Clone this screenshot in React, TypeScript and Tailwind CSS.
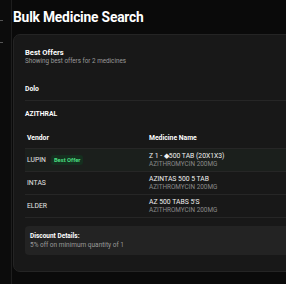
import React from "react";

const rows = [
  { vendor: "LUPIN", best: true, name: "Z 1 - \u25C6500 TAB (20X1X3)", sub: "AZITHROMYCIN 200MG" },
  { vendor: "INTAS", best: false, name: "AZINTAS 500 5 TAB", sub: "AZITHROMYCIN 200MG" },
  { vendor: "ELDER", best: false, name: "AZ 500 TABS 5'S", sub: "AZITHROMYCIN 200MG" },
];

export default function App() {
  return (
    <div
      className="w-[286px] h-[284px] flex bg-[#0a0a0a] overflow-hidden text-white"
      style={{ fontFamily: 'Roboto, "Noto Sans", sans-serif' }}
    >
      <div className="w-[12px] shrink-0 border-r border-[#1e1e1e] bg-[#0c0c0c] flex flex-col">
        <div className="mt-[20px] w-[3px] h-[1px] bg-[#555]" />
        <div className="mt-[21px] w-[3px] h-[1px] bg-[#555]" />
      </div>
      <div className="flex-1 pl-[1px] flex flex-col min-w-0">
        <div className="h-[34px] flex items-center">
          <h1 className="text-[13.8px] leading-none font-bold tracking-[-0.2px] mt-[1px]">Bulk Medicine Search</h1>
        </div>
        <div className="w-[300px] h-[238px] rounded-[7px] border border-[#242424] bg-[#181818] px-[11px] pt-[13px]">
          <div className="text-[7.6px] leading-[10px] font-bold">Best Offers</div>
          <div className="text-[6.3px] leading-[7px] text-[#9a9a9a]">Showing best offers for 2 medicines</div>

          <div className="mt-[14px] h-[22px] flex items-center border-b border-[#262626]">
            <span className="text-[6.8px] font-bold">Dolo</span>
          </div>
          <div className="h-[26px] flex items-center">
            <span className="text-[6.8px] font-bold">AZITHRAL</span>
          </div>

          <div className="flex flex-col">
            <div className="h-[22px] pt-[2px] flex items-center border-b border-[#262626] text-[6.8px] font-bold">
              <div className="w-[124px] pl-[2px]">Vendor</div>
              <div>Medicine Name</div>
            </div>
            {rows.map((r) => (
              <div
                key={r.vendor}
                className={`h-[23px] flex items-center border-b border-[#262626] ${r.best ? "bg-[#1b1f1c]" : ""}`}
              >
                <div className="w-[124px] pl-[2px] flex items-center gap-[5px]">
                  <span className="text-[6.8px] text-[#e5e5e5]">{r.vendor}</span>
                  {r.best && (
                    <span className="text-[5.8px] leading-[10px] font-bold text-[#4ade80] bg-[#15301f] rounded-[3px] px-[3px]">
                      Best Offer
                    </span>
                  )}
                </div>
                <div className="flex flex-col">
                  <span className="text-[6.8px] leading-[9px] text-[#f0f0f0]">{r.name}</span>
                  <span className="text-[6.4px] leading-[7px] text-[#8a8a8a]">{r.sub}</span>
                </div>
              </div>
            ))}
          </div>

          <div className="mt-[8px] h-[29px] rounded-[4px] bg-[#232323] px-[5px] flex flex-col justify-center">
            <span className="text-[6.5px] leading-[9px] font-bold">Discount Details:</span>
            <span className="text-[6.5px] leading-[9px] text-[#9a9a9a]">5% off on minimum quantity of 1</span>
          </div>
        </div>
      </div>
    </div>
  );
}
